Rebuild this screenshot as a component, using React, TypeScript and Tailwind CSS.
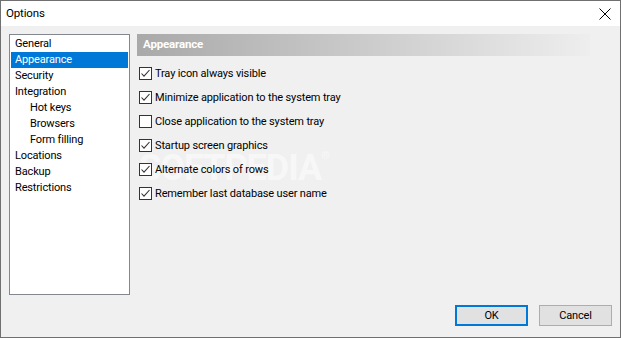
import React from "react";

const items: { label: string; indent?: boolean; selected?: boolean }[] = [
  { label: "General" },
  { label: "Appearance", selected: true },
  { label: "Security" },
  { label: "Integration" },
  { label: "Hot keys", indent: true },
  { label: "Browsers", indent: true },
  { label: "Form filling", indent: true },
  { label: "Locations" },
  { label: "Backup" },
  { label: "Restrictions" },
];

const options: { label: string; checked: boolean }[] = [
  { label: "Tray icon always visible", checked: true },
  { label: "Minimize application to the system tray", checked: true },
  { label: "Close application to the system tray", checked: false },
  { label: "Startup screen graphics", checked: true },
  { label: "Alternate colors of rows", checked: true },
  { label: "Remember last database user name", checked: true },
];

function Checkbox({ checked }: { checked: boolean }) {
  return (
    <div className="w-[13px] h-[13px] border border-[#333333] bg-white flex-none relative">
      {checked && (
        <svg width="11" height="11" viewBox="0 0 11 11" className="absolute left-0 top-0">
          <polyline points="1.5,5.5 4,8.2 9.5,2" fill="none" stroke="#333333" strokeWidth="1.1" />
        </svg>
      )}
    </div>
  );
}

export default function App() {
  return (
    <div className="w-[621px] h-[338px] border border-[#707070] flex flex-col bg-[#f0f0f0] text-[11px] tracking-[-0.15px] text-black overflow-hidden font-['Roboto',sans-serif]">
      <div className="h-[25px] bg-white flex items-center justify-between pl-[5px] pr-[9px] flex-none">
        <span className="text-[11.5px] leading-none">Options</span>
        <svg width="12" height="12" viewBox="0 0 12 12">
          <path d="M0.5 0.5 L11.5 11.5 M11.5 0.5 L0.5 11.5" stroke="#000" strokeWidth="1" fill="none" />
        </svg>
      </div>
      <div className="flex-1 flex flex-col pt-[8px] pl-[8px] pr-[8px] pb-[11px]">
        <div className="flex h-[261px] gap-[7px]">
          <div className="w-[121px] h-[261px] border border-[#828790] bg-white p-[1px] flex-none">
            {items.map((it) => (
              <div
                key={it.label}
                className={`h-[16px] leading-[16px] ${it.indent ? "pl-[19px]" : "pl-[4px]"} ${
                  it.selected ? "bg-[#0078d7] text-white" : ""
                }`}
              >
                {it.label}
              </div>
            ))}
          </div>
          <div className="flex-1 flex flex-col pr-[22px] relative">
            <div className="h-[22px] bg-gradient-to-r from-[#a9a9a9] to-[#eeeeee] flex items-center pl-[6px] text-white font-bold text-[11.5px]">
              Appearance
            </div>
            <div className="absolute left-[2px] top-[116px] text-[36px] leading-none font-bold tracking-[-1px] text-white opacity-50 pointer-events-none select-none">
              SOFTPEDIA<span className="text-[11px] align-top">®</span>
            </div>
            <div className="flex flex-col pl-[2px] pt-[11px] gap-[11px] relative">
              {options.map((o) => (
                <div key={o.label} className="flex items-center h-[13px] gap-[3px]">
                  <Checkbox checked={o.checked} />
                  <span className="leading-[13px]">{o.label}</span>
                </div>
              ))}
            </div>
          </div>
        </div>
        <div className="flex justify-end gap-[11px] mt-[10px]">
          <button className="w-[73px] h-[21px] border-2 border-[#0078d7] bg-[#e1e1e1] leading-none">
            OK
          </button>
          <button className="w-[73px] h-[21px] border border-[#adadad] bg-[#e1e1e1] leading-none">
            Cancel
          </button>
        </div>
      </div>
    </div>
  );
}
